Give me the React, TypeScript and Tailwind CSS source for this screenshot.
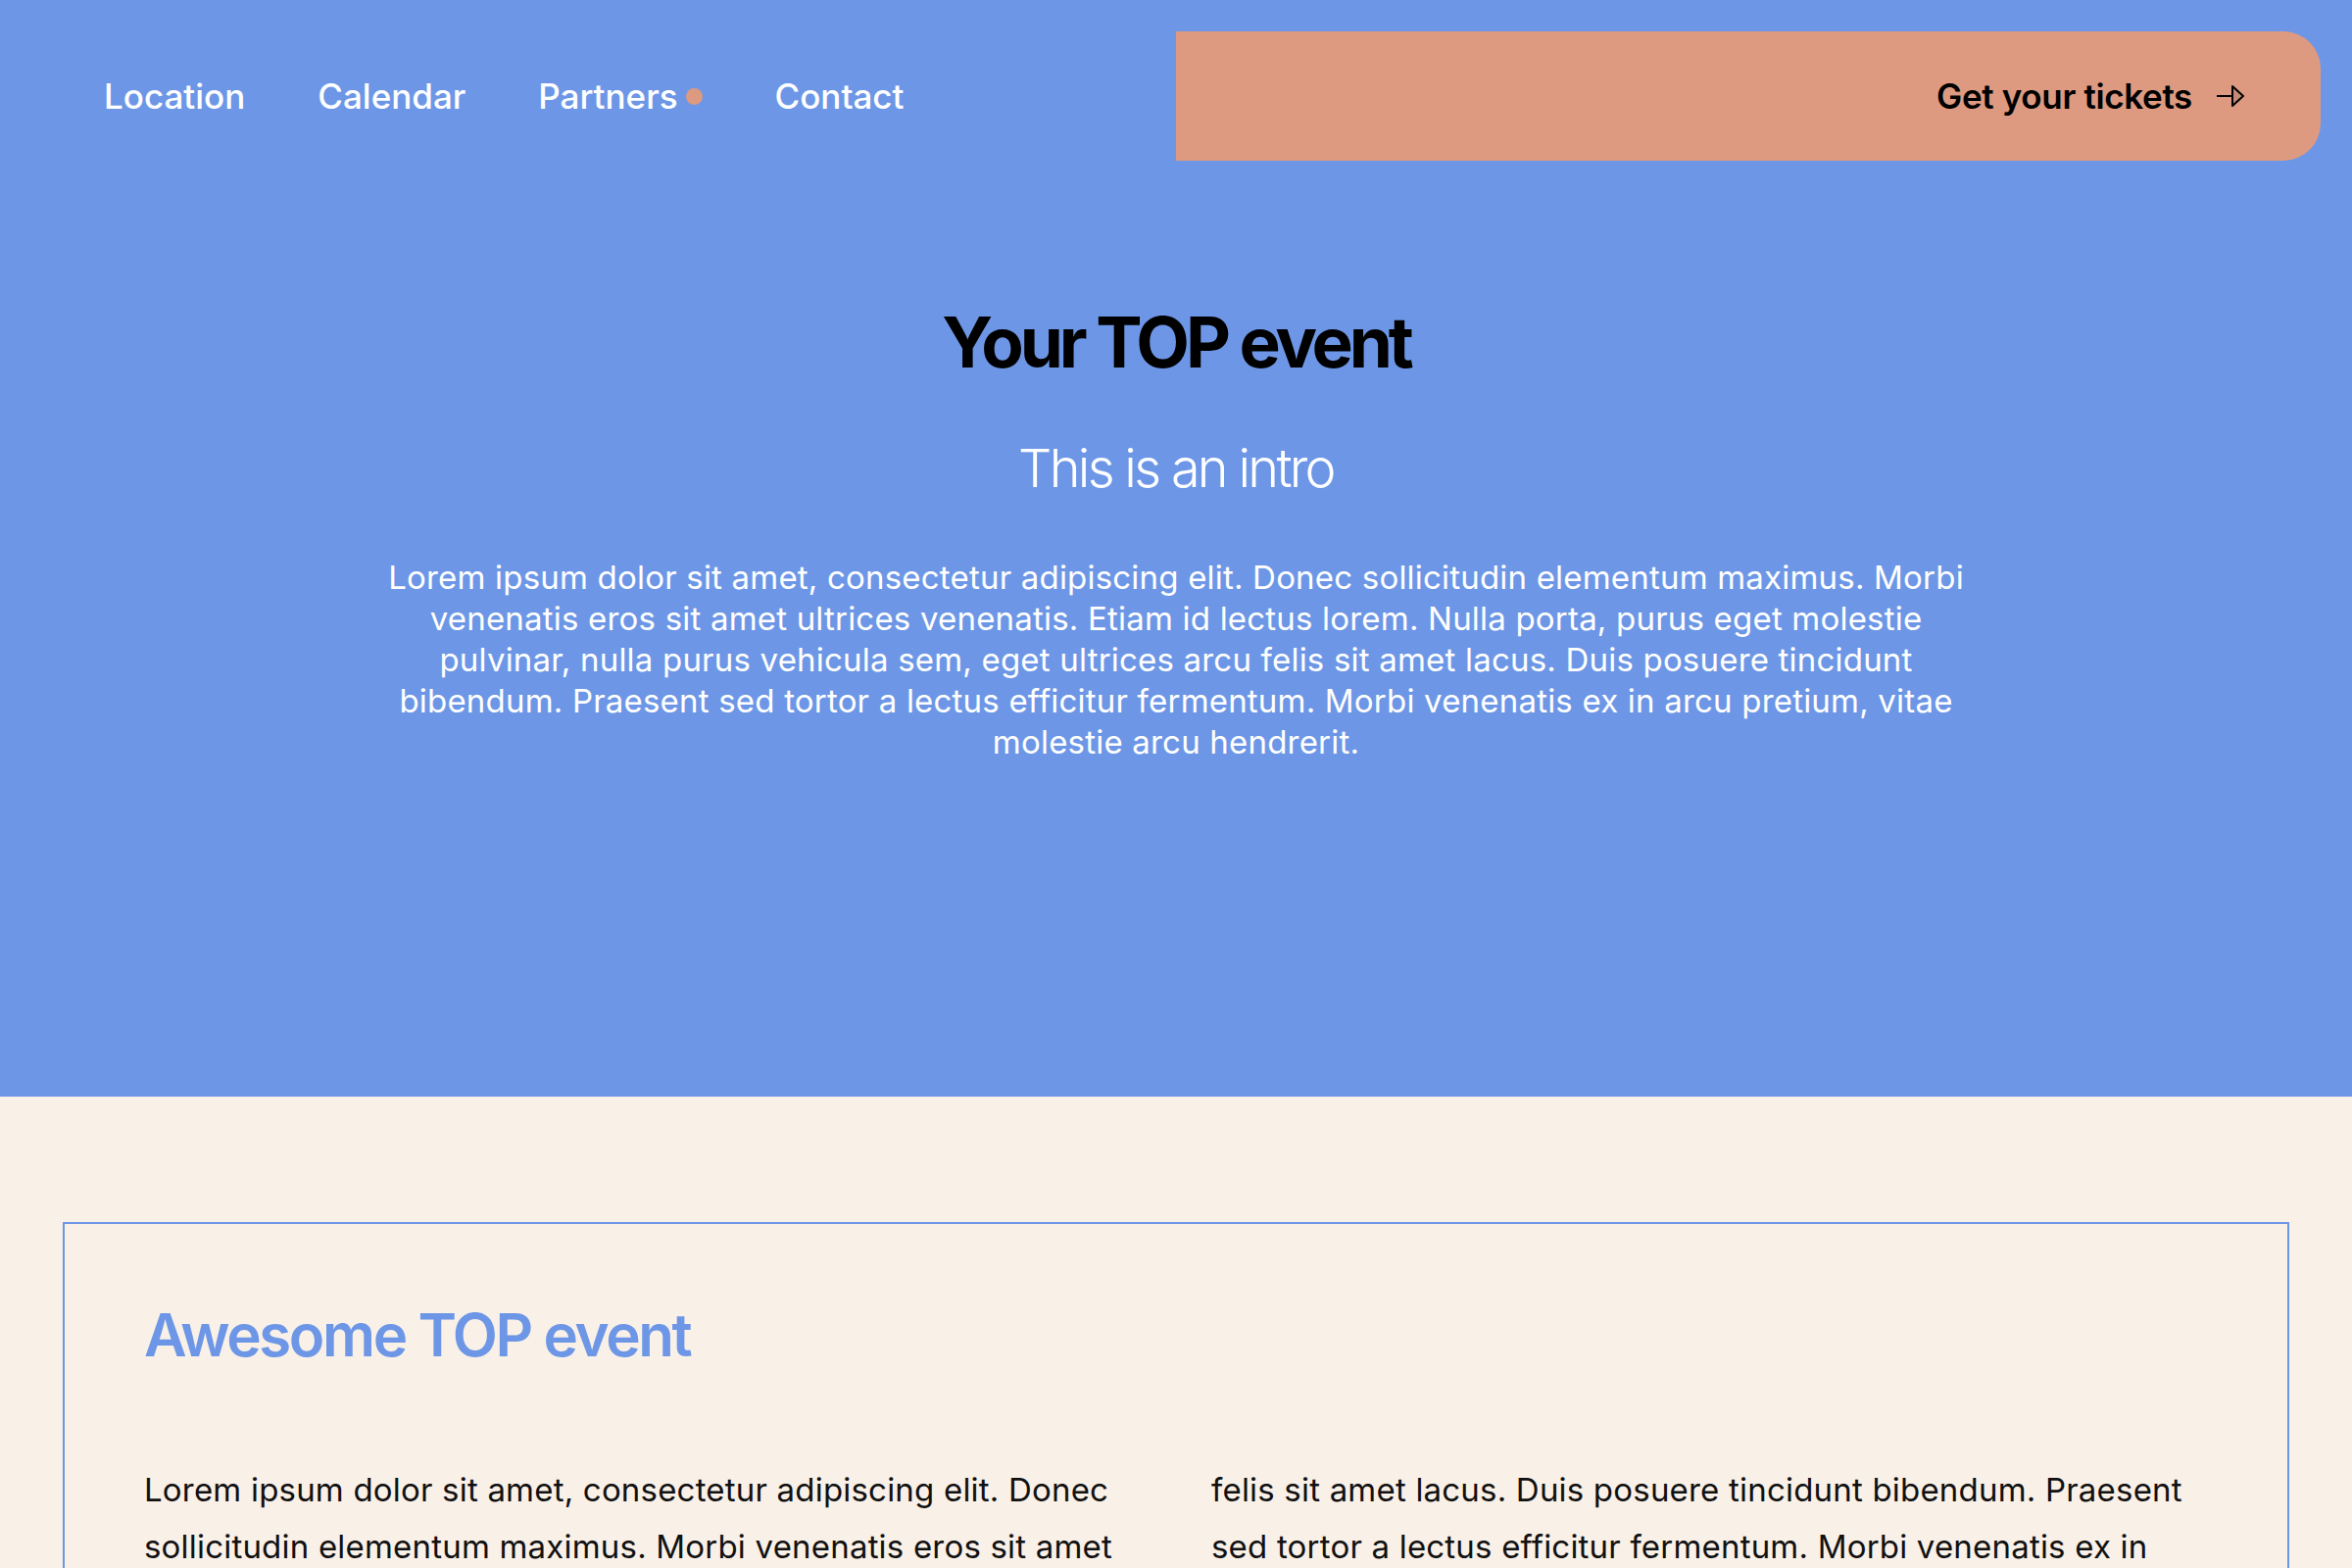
const lorem =
  'Lorem ipsum dolor sit amet, consectetur adipiscing elit. Donec sollicitudin elementum maximus. Morbi venenatis eros sit amet ultrices venenatis. Etiam id lectus lorem. Nulla porta, purus eget molestie pulvinar, nulla purus vehicula sem, eget ultrices arcu felis sit amet lacus. Duis posuere tincidunt bibendum. Praesent sed tortor a lectus efficitur fermentum. Morbi venenatis ex in arcu pretium, vitae molestie arcu hendrerit.';

const links = ['Location', 'Calendar', 'Partners', 'Contact'];

const ArrowIcon = () => (
  <svg width="30" height="24" viewBox="0 0 30 24" fill="none" aria-hidden>
    <line x1="1" y1="12" x2="17" y2="12" stroke="#000" strokeWidth="2" />
    <polygon points="17,2 28,12 17,22" fill="#c48c76" stroke="#000" strokeWidth="2" strokeLinejoin="round" />
  </svg>
);

const Header = () => (
  <header className="grid grid-cols-2 pt-8">
    <nav className="flex items-center gap-[74px] pl-[106px]">
      {links.map((link) => (
        <a key={link} href="#" className="flex items-center gap-2 text-[35px] font-medium text-white">
          {link}
          {link === 'Partners' && <span className="h-[17px] w-[17px] rounded-full bg-[#dd9a80]" />}
        </a>
      ))}
    </nav>
    <a
      href="#"
      className="mr-8 flex h-[132px] items-center justify-end gap-6 rounded-r-[38px] bg-[#dd9a80] pr-[77px] text-[35px] font-semibold tracking-[-0.01em] text-black"
    >
      Get your tickets
      <ArrowIcon />
    </a>
  </header>
);

export default function App() {
  return (
    <div className="min-h-screen bg-[#f9f0e8] font-['Inter','Noto_Sans',sans-serif]">
      {/* Hero */}
      <section className="bg-[#6d97e6] pb-[341px]">
        <Header />
        <div className="mt-[146px] flex flex-col items-center text-center">
          <h1 className="text-[71px] font-bold leading-[1.1] tracking-[-0.058em] text-black">Your TOP event</h1>
          <h2 className="mt-[58px] text-[54px] font-[350] leading-[1.2] tracking-[-0.05em] text-white">This is an intro</h2>
          <p className="mt-[57px] max-w-[1630px] text-[33px] leading-[42px] tracking-[0.006em] text-white">{lorem}</p>
        </div>
      </section>

      {/* About */}
      <section className="px-16 pt-[128px] pb-32">
        <div className="border-2 border-[#6d97e6] px-[81px] pt-[77px] pb-20">
          <h2 className="text-[60px] font-semibold leading-[1.2] tracking-[-0.04em] text-[#6d97e6]">Awesome TOP event</h2>
          <div className="mt-[93px] columns-2 gap-[72px] text-[33px] leading-[58px] tracking-[0.006em] text-[#111]">
            <p>{lorem}</p>
          </div>
        </div>
      </section>
    </div>
  );
}
